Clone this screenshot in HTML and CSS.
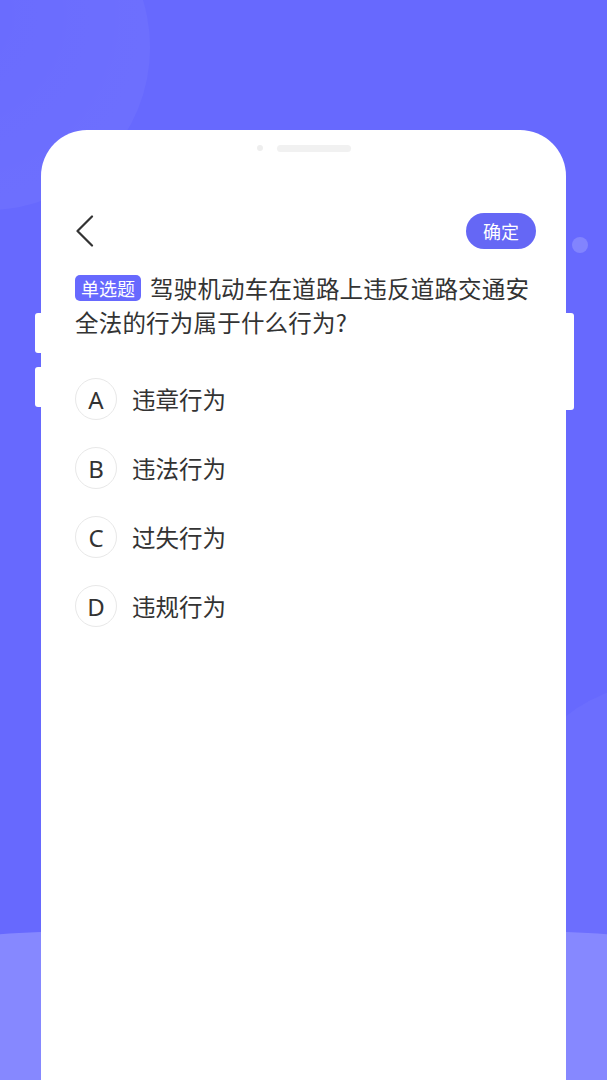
FILE: index.html
```html
<!DOCTYPE html>
<html lang="zh">
<head>
<meta charset="utf-8">
<link rel="stylesheet" href="styles.css">
</head>
<body>
<div class="screen">
  <div class="bg-circle-tl"></div>
  <div class="bg-circle-r"></div>
  <div class="bg-bottom"></div>
  <div class="bg-dot"></div>
  <div class="btn-side btn-l1"></div>
  <div class="btn-side btn-l2"></div>
  <div class="btn-side btn-r1"></div>
  <div class="phone">
    <div class="notch"><span class="cam"></span><span class="speaker"></span></div>
    <div class="topbar">
      <svg class="back" width="18" height="32" viewBox="0 0 18 32"><path d="M16 1.5 L1.5 16 L16 30.5" fill="none" stroke="#333" stroke-width="2.2" stroke-linecap="round" stroke-linejoin="round"/></svg>
      <div class="confirm">确定</div>
    </div>
    <div class="question"><span class="tag">单选题</span><span class="qtext">驾驶机动车在道路上违反道路交通安全法的行为属于什么行为?</span></div>
    <div class="options">
      <div class="option"><span class="letter">A</span><span class="otext">违章行为</span></div>
      <div class="option"><span class="letter">B</span><span class="otext">违法行为</span></div>
      <div class="option"><span class="letter">C</span><span class="otext">过失行为</span></div>
      <div class="option"><span class="letter">D</span><span class="otext">违规行为</span></div>
    </div>
  </div>
</div>
</body>
</html>
```
FILE: styles.css
```css
html, body { margin: 0; padding: 0; }
body { font-family: "Noto Sans CJK SC", "Noto Sans", sans-serif; }
.screen {
  position: relative;
  width: 607px;
  height: 1080px;
  overflow: hidden;
  background: #6769fe;
}
.bg-circle-tl {
  position: absolute;
  left: -175px;
  top: -115px;
  width: 325px;
  height: 325px;
  border-radius: 50%;
  background: radial-gradient(circle at 40% 40%, rgba(255,255,255,0.015), rgba(255,255,255,0.05));
}
.bg-circle-r {
  position: absolute;
  left: 510px;
  top: 683px;
  width: 300px;
  height: 300px;
  border-radius: 50%;
  background: rgba(255,255,255,0.035);
}
.bg-bottom {
  position: absolute;
  left: -300px;
  right: -300px;
  top: 926px;
  height: 600px;
  border-radius: 50% 50% 0 0 / 60px 60px 0 0;
  background: #8688ff;
}
.bg-dot {
  position: absolute;
  left: 572px;
  top: 237px;
  width: 16px;
  height: 16px;
  border-radius: 50%;
  background: rgba(255,255,255,0.18);
}
.btn-side {
  position: absolute;
  background: #fff;
  border-radius: 3px;
}
.btn-l1 { left: 35px; top: 313px; width: 10px; height: 40px; }
.btn-l2 { left: 35px; top: 367px; width: 10px; height: 40px; }
.btn-r1 { left: 562px; top: 313px; width: 12px; height: 97px; }
.phone {
  position: absolute;
  left: 41px;
  top: 130px;
  width: 525px;
  height: 1000px;
  background: #fff;
  border-radius: 46px 46px 0 0;
  box-sizing: border-box;
  padding: 0 30px 0 34px;
}
.notch {
  display: flex;
  justify-content: center;
  align-items: center;
  gap: 14px;
  padding-top: 14px;
  height: 8px;
  margin-left: -4px;
}
.cam { width: 6px; height: 6px; border-radius: 50%; background: #eeeeee; }
.speaker { width: 74px; height: 7px; border-radius: 4px; background: #f1f1f1; }
.topbar {
  display: flex;
  justify-content: space-between;
  align-items: center;
  margin-top: 61px;
  height: 36px;
}
.back { margin-left: 1px; }
.confirm {
  background: #6567f5;
  color: #fff;
  font-size: 18px;
  line-height: 36px;
  height: 36px;
  width: 70px;
  text-align: center;
  border-radius: 18px;
}
.question {
  margin-top: 22px;
  font-size: 23.5px;
  line-height: 34px;
  color: #333;
}
.qtext { letter-spacing: 0.2px; }
.tag {
  float: left;
  background: #6769fe;
  color: #fff;
  font-size: 18px;
  line-height: 26px;
  height: 26px;
  padding: 0 6px;
  border-radius: 5px;
  margin-right: 9px;
  margin-top: 4px;
}
.options {
  display: flex;
  flex-direction: column;
  gap: 27px;
  margin-top: 39px;
}
.option {
  display: flex;
  align-items: center;
  gap: 15px;
}
.letter {
  width: 40px;
  height: 40px;
  border: 1px solid #e8e8e8;
  border-radius: 50%;
  display: flex;
  align-items: center;
  justify-content: center;
  font-family: "Noto Sans", sans-serif;
  font-size: 24px;
  color: #333;
}
.otext {
  font-size: 23.5px;
  color: #333;
}
```
